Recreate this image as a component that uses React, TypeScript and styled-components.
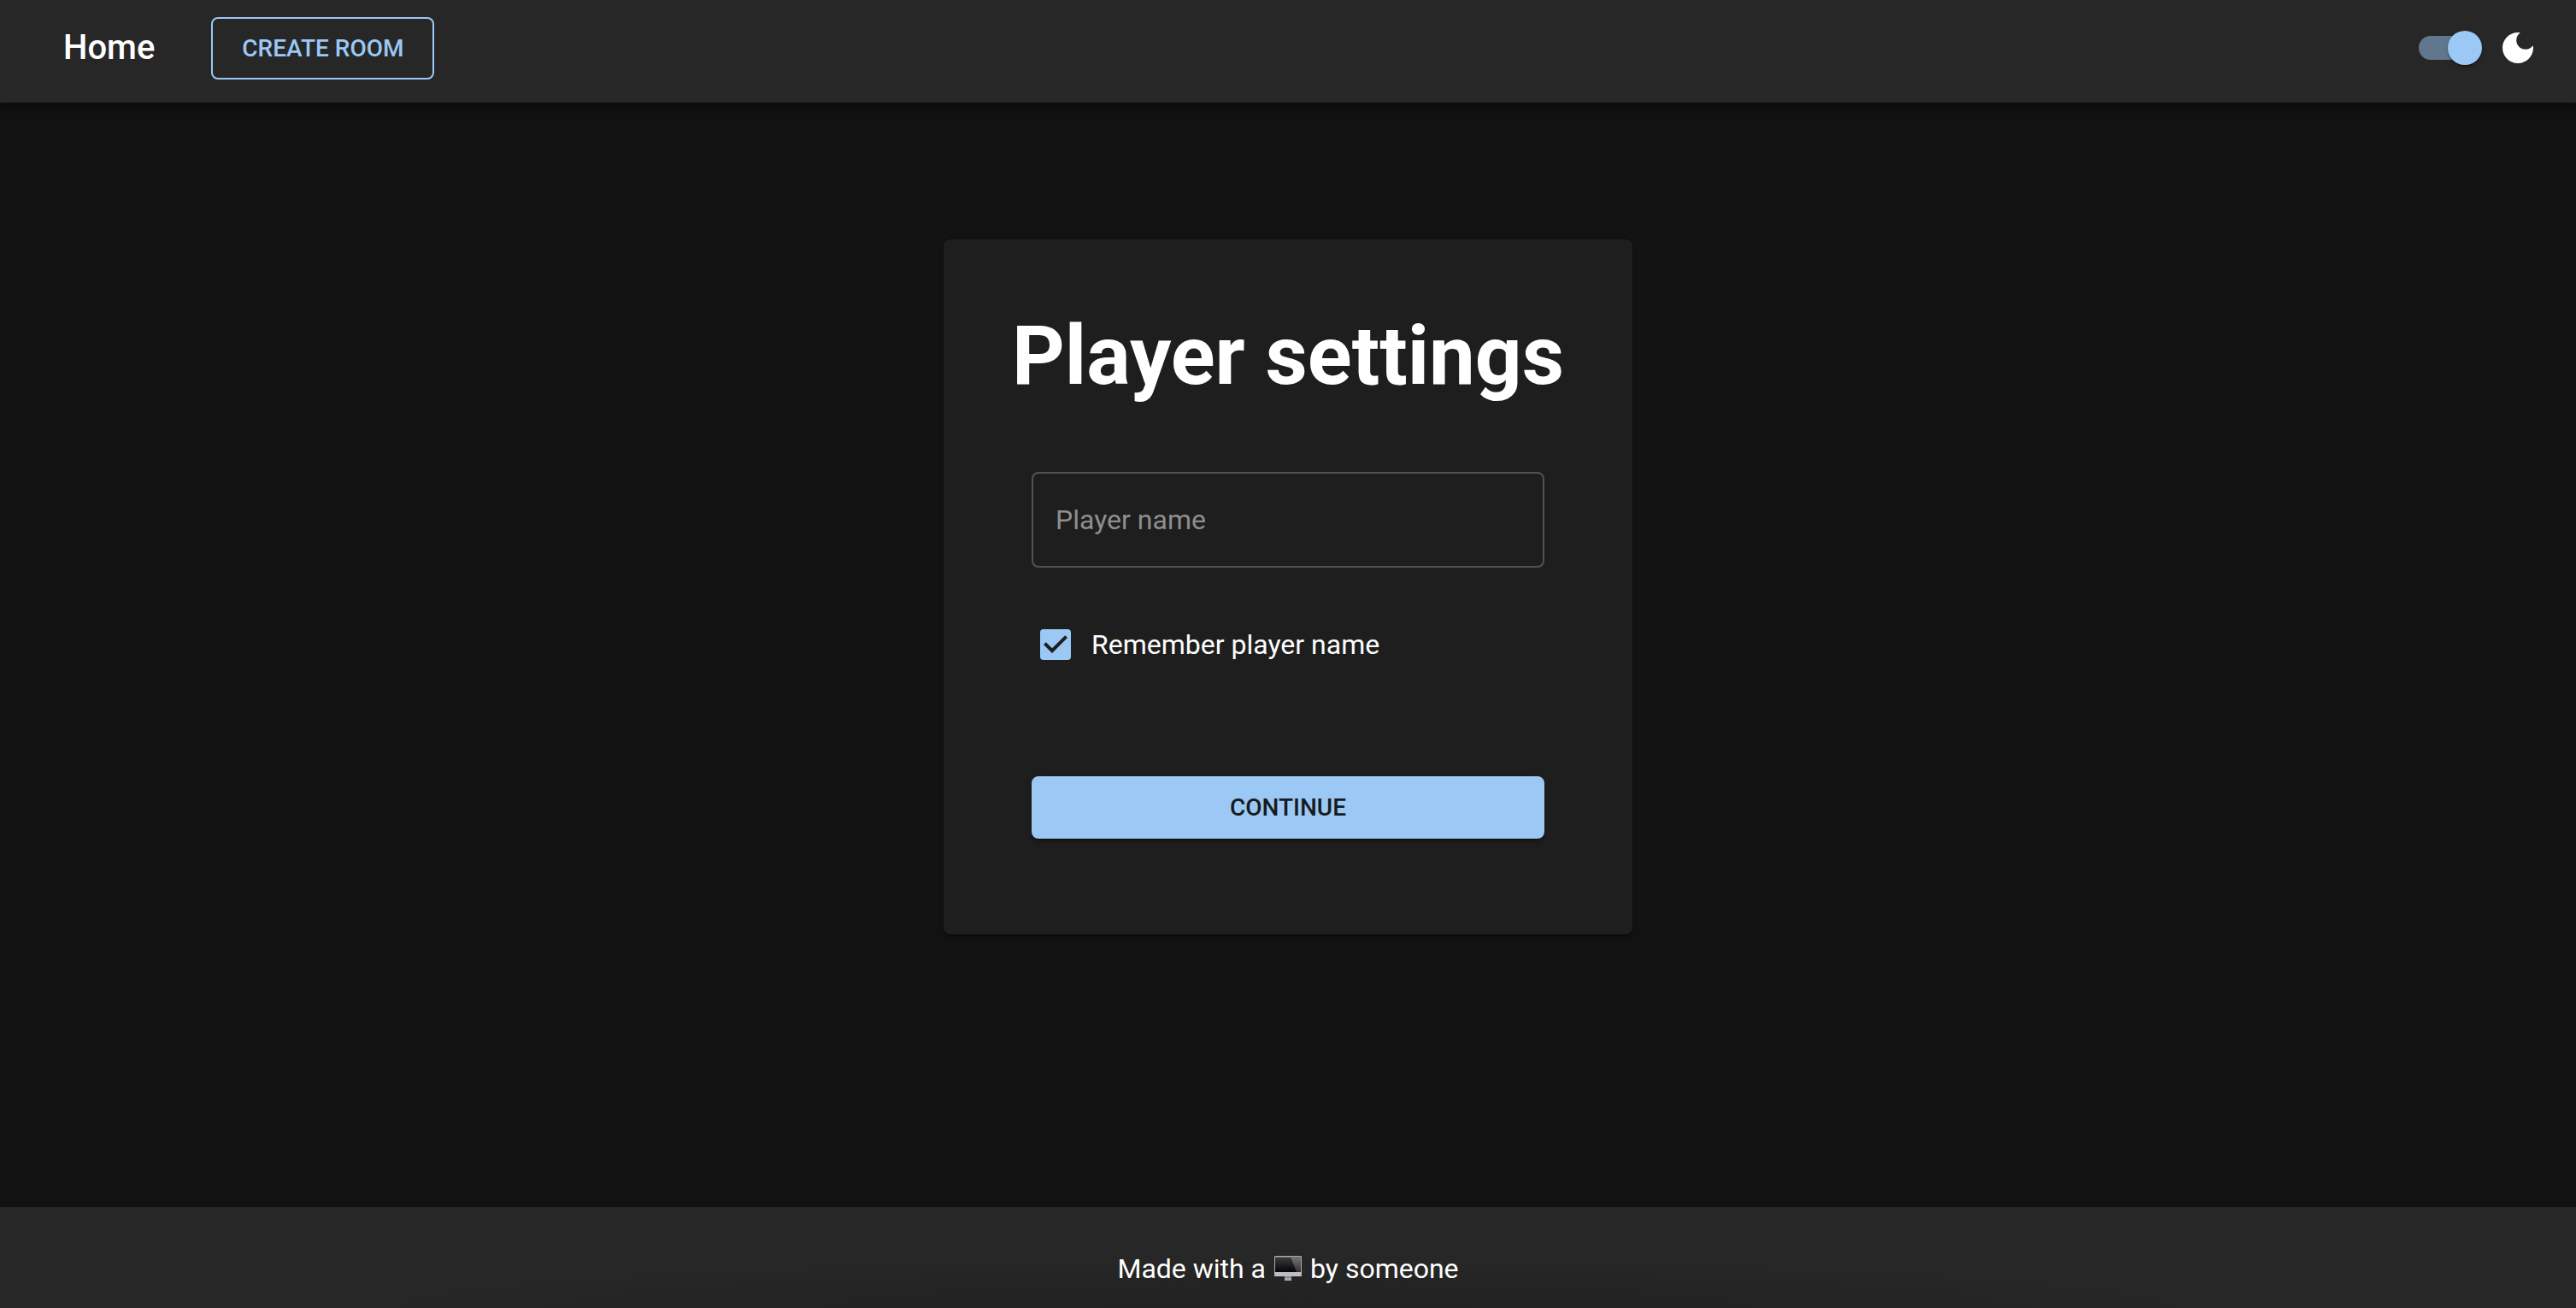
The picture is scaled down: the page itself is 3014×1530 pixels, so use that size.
import React, { useState } from "react";
import styled, { createGlobalStyle } from "styled-components";

const blue = "#9bc8f5";
const bar = "#272727";
const paper = "#1e1e1e";

const GlobalStyle = createGlobalStyle`
  *, *::before, *::after { box-sizing: border-box; }
  body {
    margin: 0;
    background: #121212;
    color: #fff;
    font: 400 32px/48px Roboto, "Liberation Sans", sans-serif;
    -webkit-font-smoothing: antialiased;
  }
`;

const Page = styled.div`
  min-height: 100vh;
  display: flex;
  flex-direction: column;
`;

const TopBar = styled.header`
  display: flex;
  align-items: center;
  justify-content: space-between;
  height: 120px;
  padding: 0 48px 8px 74px;
  background: ${bar};
  box-shadow: 0 4px 8px -2px rgba(0, 0, 0, 0.2), 0 8px 10px rgba(0, 0, 0, 0.14),
    0 2px 20px rgba(0, 0, 0, 0.12);
`;

const Nav = styled.nav`
  display: flex;
  align-items: center;
  gap: 66px;
`;

const HomeLink = styled.a`
  color: #fff;
  font-size: 40px;
  font-weight: 500;
  text-decoration: none;
`;

const Button = styled.button<{ $filled?: boolean }>`
  height: 73px;
  padding: 0 34px;
  border: 2px solid ${blue};
  border-radius: 8px;
  background: ${(p) => (p.$filled ? blue : "transparent")};
  color: ${(p) => (p.$filled ? "#161b20" : blue)};
  box-shadow: ${(p) =>
    p.$filled
      ? "0 6px 2px -4px rgba(0,0,0,.2), 0 4px 4px rgba(0,0,0,.14), 0 2px 10px rgba(0,0,0,.12)"
      : "none"};
  font-family: inherit;
  font-size: 28px;
  font-weight: 500;
  text-transform: uppercase;
  cursor: pointer;
`;

const ThemeControl = styled.label`
  display: flex;
  align-items: center;
  gap: 22px;
  cursor: pointer;
`;

const Switch = styled.input`
  appearance: none;
  display: grid;
  align-items: center;
  width: 74px;
  height: 40px;
  margin: 0;
  cursor: pointer;

  &::before,
  &::after {
    content: "";
    grid-area: 1 / 1;
  }

  &::before {
    width: 68px;
    height: 28px;
    border-radius: 14px;
    background: #61778d;
  }

  &::after {
    width: 40px;
    height: 40px;
    justify-self: ${(p) => (p.checked ? "end" : "start")};
    border-radius: 50%;
    background: ${blue};
    box-shadow: 0 4px 2px -2px rgba(0, 0, 0, 0.2), 0 2px 2px rgba(0, 0, 0, 0.14),
      0 2px 6px rgba(0, 0, 0, 0.12);
  }
`;

const MoonIcon = styled.svg`
  display: block;
  width: 40px;
  height: 40px;
  fill: #fff;
`;

const Main = styled.main`
  flex: 1;
  display: flex;
  flex-direction: column;
  align-items: center;
  padding: 160px 32px;
`;

const Card = styled.section`
  display: flex;
  flex-direction: column;
  align-items: center;
  padding: 80px 80px 112px;
  border-radius: 8px;
  background: ${paper};
  box-shadow: 0 4px 2px -2px rgba(0, 0, 0, 0.2), 0 2px 2px rgba(0, 0, 0, 0.14),
    0 2px 6px rgba(0, 0, 0, 0.12);
`;

const Title = styled.h1`
  margin: 0;
  font-size: 96px;
  line-height: 112px;
  font-weight: 700;
`;

const Form = styled.form`
  display: flex;
  flex-direction: column;
  width: 600px;
  max-width: 100%;
  padding-top: 80px;
`;

const NameInput = styled.input`
  height: 112px;
  padding: 0 26px;
  border: 2px solid #525252;
  border-radius: 8px;
  background: transparent;
  color: #fff;
  font: inherit;
  outline: none;

  &::placeholder {
    color: #8e8e8e;
    opacity: 1;
  }
`;

const Remember = styled.label`
  display: flex;
  align-items: center;
  gap: 24px;
  padding: 66px 10px 130px;
  cursor: pointer;
`;

const Checkbox = styled.input`
  appearance: none;
  width: 36px;
  height: 36px;
  margin: 0;
  border: 4px solid ${blue};
  border-radius: 4px;
  cursor: pointer;

  &:checked {
    border: 0;
    background: ${blue}
      url("data:image/svg+xml,%3Csvg xmlns='http://www.w3.org/2000/svg' viewBox='3 3 18 18'%3E%3Cpath fill='%231e1e1e' d='M10 17l-5-5 1.41-1.41L10 14.17l7.59-7.59L19 8l-9 9z'/%3E%3C/svg%3E")
      center / 36px 36px no-repeat;
  }
`;

const Footer = styled.footer`
  display: flex;
  justify-content: center;
  align-items: center;
  height: 118px;
  padding: 42px 32px 16px;
  background: radial-gradient(
      ellipse 37% 50% at 50% 100%,
      rgba(0, 0, 0, 0.14),
      rgba(0, 0, 0, 0.08) 60%,
      transparent
    )
    ${bar};
`;

const Credit = styled.p`
  display: flex;
  align-items: center;
  gap: 9px;
  margin: 0;
`;

const ScreenIcon = styled.svg`
  display: block;
  width: 34px;
  height: 30px;
`;

function Screen() {
  return (
    <ScreenIcon viewBox="0 0 34 30" role="img" aria-label="computer">
      <defs>
        <linearGradient id="glass" x1="0" y1="0" x2="0" y2="1">
          <stop offset="0" stopColor="#3d3d3d" />
          <stop offset="1" stopColor="#050505" />
        </linearGradient>
        <linearGradient id="glare" x1="0" y1="0" x2="0" y2="1">
          <stop offset="0" stopColor="#777" />
          <stop offset="1" stopColor="#303030" />
        </linearGradient>
      </defs>
      <path d="M13 24h8v5h-8z" fill="#a5a7a8" />
      <path d="M13 24h8v2h-8z" fill="#858788" />
      <rect x="1" y="0" width="32" height="24" rx="1" fill="#aaa9ad" />
      <rect x="1" y="19" width="32" height="5" rx="1" fill="#bfbdc3" />
      <rect x="2" y="1" width="30" height="18" fill="url(#glass)" />
      <path d="M20 1h12v18h-5z" fill="url(#glare)" />
      <path d="M2 1h30v1H2z" fill="#707070" />
    </ScreenIcon>
  );
}

export default function App() {
  const [dark, setDark] = useState(true);
  const [remember, setRemember] = useState(true);
  const [name, setName] = useState("");

  return (
    <Page>
      <GlobalStyle />
      <TopBar>
        <Nav>
          <HomeLink href="#home">Home</HomeLink>
          <Button type="button">Create room</Button>
        </Nav>
        <ThemeControl>
          <Switch
            type="checkbox"
            role="switch"
            aria-label="Dark mode"
            checked={dark}
            onChange={(e) => setDark(e.target.checked)}
          />
          <MoonIcon viewBox="2 2 20 20" aria-hidden="true">
            <path d="M12 3c-4.97 0-9 4.03-9 9s4.03 9 9 9 9-4.03 9-9c0-.46-.04-.92-.1-1.36-.98 1.37-2.58 2.26-4.4 2.26-2.98 0-5.4-2.42-5.4-5.4 0-1.81.89-3.42 2.26-4.4-.44-.06-.9-.1-1.36-.1z" />
          </MoonIcon>
        </ThemeControl>
      </TopBar>
      <Main>
        <Card>
          <Title>Player settings</Title>
          <Form onSubmit={(e) => e.preventDefault()}>
            <NameInput
              type="text"
              aria-label="Player name"
              placeholder="Player name"
              value={name}
              onChange={(e) => setName(e.target.value)}
            />
            <Remember>
              <Checkbox
                type="checkbox"
                checked={remember}
                onChange={(e) => setRemember(e.target.checked)}
              />
              Remember player name
            </Remember>
            <Button type="submit" $filled>
              Continue
            </Button>
          </Form>
        </Card>
      </Main>
      <Footer>
        <Credit>
          Made with a <Screen /> by someone
        </Credit>
      </Footer>
    </Page>
  );
}
